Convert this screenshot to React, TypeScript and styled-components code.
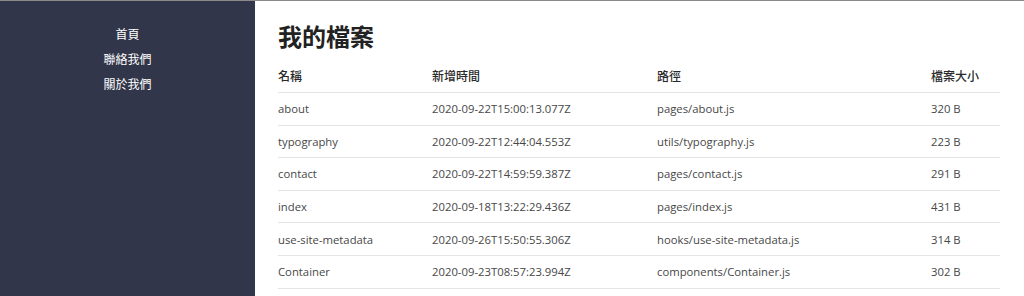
import styled, { createGlobalStyle } from 'styled-components'

const GlobalStyle = createGlobalStyle`
    html, body {
        margin: 0;
        padding: 0;
        background: #fff;
    }
    body {
        font-family: "Open Sans", "Noto Sans CJK TC", sans-serif;
        color: #333;
    }
`;

const Page = styled.div`
    display: flex;
    width: 1024px;
    height: 296px;
    border-top: 1px solid #8a8a8a;
    box-sizing: border-box;
    overflow: hidden;
`;

const Sidebar = styled.nav`
    width: 255px;
    flex-shrink: 0;
    background: #32364a;
    display: flex;
    flex-direction: column;
    align-items: center;
    padding-top: 24px;
    gap: 7px;
    box-sizing: border-box;

    a {
        color: #fff;
        text-decoration: none;
        font-size: 12px;
        line-height: 18px;
        font-family: "Noto Sans CJK TC", sans-serif;
    }
`;

const Main = styled.main`
    flex: 1;
    padding: 18px 24px 0 23px;
`;

const Title = styled.h1`
    margin: 0 0 9px;
    font-size: 24px;
    line-height: 34px;
    font-weight: 700;
    color: #222;
    font-family: "Noto Sans CJK TC", sans-serif;
`;

const Table = styled.table`
    width: 722px;
    border-collapse: collapse;
    font-size: 11.3px;

    th {
        text-align: left;
        font-size: 12px;
        font-weight: 500;
        color: #2a2a2a;
        font-family: "Noto Sans CJK TC", sans-serif;
        padding: 0 0 8px;
        height: 22px;
        border-bottom: 1px solid #e4e4e4;
        vertical-align: bottom;
    }

    td {
        height: 31.6px;
        padding: 0;
        color: #474747;
        border-bottom: 1px solid #e4e4e4;
    }
`;

const Col = styled.col<{ $w: number }>`
    width: ${p => p.$w}px;
`;

const files = [
    { name: 'about', time: '2020-09-22T15:00:13.077Z', path: 'pages/about.js', size: '320 B' },
    { name: 'typography', time: '2020-09-22T12:44:04.553Z', path: 'utils/typography.js', size: '223 B' },
    { name: 'contact', time: '2020-09-22T14:59:59.387Z', path: 'pages/contact.js', size: '291 B' },
    { name: 'index', time: '2020-09-18T13:22:29.436Z', path: 'pages/index.js', size: '431 B' },
    { name: 'use-site-metadata', time: '2020-09-26T15:50:55.306Z', path: 'hooks/use-site-metadata.js', size: '314 B' },
    { name: 'Container', time: '2020-09-23T08:57:23.994Z', path: 'components/Container.js', size: '302 B' },
];

const App = () => {
    return (
        <>
            <GlobalStyle />
            <Page>
                <Sidebar>
                    <a href="#">首頁</a>
                    <a href="#">聯絡我們</a>
                    <a href="#">關於我們</a>
                </Sidebar>
                <Main>
                    <Title>我的檔案</Title>
                    <Table>
                        <colgroup>
                            <Col $w={154} />
                            <Col $w={225} />
                            <Col $w={274} />
                            <Col $w={69} />
                        </colgroup>
                        <thead>
                            <tr>
                                <th>名稱</th>
                                <th>新增時間</th>
                                <th>路徑</th>
                                <th>檔案大小</th>
                            </tr>
                        </thead>
                        <tbody>
                            {files.map(f => (
                                <tr key={f.name}>
                                    <td>{f.name}</td>
                                    <td>{f.time}</td>
                                    <td>{f.path}</td>
                                    <td>{f.size}</td>
                                </tr>
                            ))}
                        </tbody>
                    </Table>
                </Main>
            </Page>
        </>
    );
}

export default App;
